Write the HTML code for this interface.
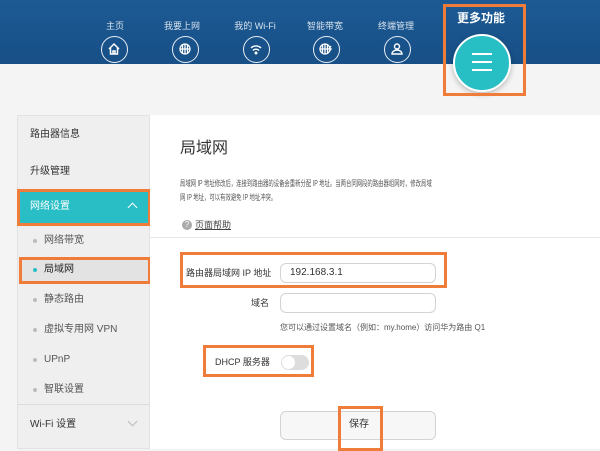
<!DOCTYPE html>
<html><head><meta charset="utf-8"><style>
*{margin:0;padding:0;box-sizing:border-box}
body{width:600px;height:449px;overflow:hidden;background:#f4f4f4;font-family:"Liberation Sans","Noto Sans CJK SC",sans-serif;position:relative;color:#333}
.a{position:absolute;line-height:12px}
.hdr{left:0;top:0;width:600px;height:64px;background:linear-gradient(#1d5a94,#174f86)}
.nav{top:20px;width:70px;text-align:center;color:#d6e2ee;font-size:9px}
.ic{top:36px;width:27px;height:27px;border:1.5px solid #e8eef5;border-radius:50%}
.ob{border:3px solid #f07c3a}
.side{left:17px;top:115px;width:133px;height:334px;background:#efefef;border:1px solid #e2e2e2}
.si{left:30px;font-size:10px;color:#333}
.sub{left:44px;font-size:10px;color:#555}
.dot{left:33px;width:4px;height:4px;border-radius:50%;background:#bbb}
.main{left:150px;top:115px;width:450px;height:334px;background:#fff}
.inp{left:280px;width:156px;height:20px;border:1px solid #d3d3d3;border-radius:6px;background:#fff;font-size:10px;padding-left:9px;line-height:18px}
</style></head><body>
<div class="a hdr"></div>
<div class="a nav" style="left:80px">主页</div>
<div class="a nav" style="left:147px">我要上网</div>
<div class="a nav" style="left:220px">我的 Wi-Fi</div>
<div class="a nav" style="left:290px">智能带宽</div>
<div class="a nav" style="left:361px">终端管理</div>
<div class="a ic" style="left:101px"><svg width="24" height="24" viewBox="0 0 24 24" fill="none" stroke="#fff" stroke-width="1.5"><path d="M7 12l5-5 5 5M8.5 11v6h7v-6M11 17v-3h2v3"/></svg></div>
<div class="a ic" style="left:172px"><svg width="24" height="24" viewBox="0 0 24 24" fill="none" stroke="#fff" stroke-width="1.3"><circle cx="12" cy="12" r="5"/><path d="M7 12h10M12 7v10M9.5 8v8M14.5 8v8"/></svg></div>
<div class="a ic" style="left:243px"><svg width="24" height="24" viewBox="0 0 24 24" fill="none" stroke="#fff" stroke-width="1.4"><path d="M7 11a7 7 0 0 1 10 0M9 13.5a4 4 0 0 1 6 0"/><circle cx="12" cy="16" r="0.8" fill="#fff"/></svg></div>
<div class="a ic" style="left:313px"><svg width="24" height="24" viewBox="0 0 24 24" fill="none" stroke="#fff" stroke-width="1.3"><circle cx="11" cy="12" r="5"/><path d="M6 12h10M11 7v10M8.5 8v8M13.5 8v8M17 9l-2 3h2l-2 3"/></svg></div>
<div class="a ic" style="left:384px"><svg width="24" height="24" viewBox="0 0 24 24" fill="none" stroke="#fff" stroke-width="1.4"><circle cx="12" cy="9.5" r="2.5"/><path d="M7 17a5 4 0 0 1 10 0z"/></svg></div>
<div class="a" style="left:457px;top:12px;color:#fff;font-size:12px;font-weight:bold">更多功能</div>
<div class="a" style="left:453px;top:34px;width:58px;height:58px;border-radius:50%;background:#27bec4;border:2px solid #fff;box-shadow:0 2px 6px rgba(0,0,0,.25)"></div>
<div class="a" style="left:472px;top:53px;width:20px;height:2px;background:#fff"></div>
<div class="a" style="left:472px;top:61px;width:20px;height:2px;background:#fff"></div>
<div class="a" style="left:472px;top:69px;width:20px;height:2px;background:#fff"></div>
<div class="a ob" style="left:443px;top:4px;width:83px;height:92px"></div>

<div class="a side"></div>
<div class="a si" style="top:129px">路由器信息</div>
<div class="a si" style="top:166px">升级管理</div>
<div class="a" style="left:17px;top:190px;width:133px;height:35px;background:#29bec5"></div>
<div class="a" style="left:30px;top:201px;color:#fff;font-size:10px">网络设置</div>
<div class="a" style="left:129px;top:204px;width:7px;height:7px;border-left:1px solid #fff;border-top:1px solid #fff;transform:rotate(45deg)"></div>
<div class="a ob" style="left:17px;top:189px;width:134px;height:37px"></div>
<div class="a" style="left:19px;top:258px;width:131px;height:25px;background:#e3e3e3"></div>
<div class="a ob" style="left:19px;top:257px;width:132px;height:27px"></div>
<div class="a dot" style="top:239px"></div><div class="a sub" style="top:235px">网络带宽</div>
<div class="a dot" style="top:268px;background:#29bec5"></div><div class="a sub" style="top:264px;color:#222">局域网</div>
<div class="a dot" style="top:298px"></div><div class="a sub" style="top:294px">静态路由</div>
<div class="a dot" style="top:328px"></div><div class="a sub" style="top:324px">虚拟专用网 VPN</div>
<div class="a dot" style="top:358px"></div><div class="a sub" style="top:354px">UPnP</div>
<div class="a dot" style="top:388px"></div><div class="a sub" style="top:384px">智联设置</div>
<div class="a" style="left:17px;top:404px;width:133px;height:1px;background:#ddd"></div>
<div class="a si" style="top:419px">Wi-Fi 设置</div>
<div class="a" style="left:129px;top:418px;width:7px;height:7px;border-right:1px solid #bbb;border-bottom:1px solid #bbb;transform:rotate(45deg)"></div>

<div class="a main"></div>
<div class="a" style="left:180px;top:140px;font-size:16px;line-height:18px;color:#333">局域网</div>
<div class="a" style="left:180px;top:177px;font-size:8px;color:#555;line-height:14px;white-space:nowrap;transform:scaleX(0.67);transform-origin:0 0">局域网 IP 地址修改后，连接到路由器的设备会重新分配 IP 地址。当两台同网段的路由器组网时，修改局域<br>网 IP 地址，可以有效避免 IP 地址冲突。</div>
<div class="a" style="left:182px;top:220px;width:10px;height:10px;border-radius:50%;background:#aaa;color:#fff;font-size:8px;text-align:center;line-height:10px">?</div>
<div class="a" style="left:195px;top:219px;font-size:9px;color:#444;text-decoration:underline">页面帮助</div>
<div class="a" style="left:150px;top:237px;width:450px;height:1px;background:#e6e6e6"></div>

<div class="a" style="left:186px;top:267px;font-size:9px">路由器局域网 IP 地址</div>
<div class="a inp" style="top:263px">192.168.3.1</div>
<div class="a ob" style="left:180px;top:252px;width:267px;height:36px"></div>
<div class="a" style="left:251px;top:297px;font-size:9px">域名</div>
<div class="a inp" style="top:293px"></div>
<div class="a" style="left:280px;top:322px;font-size:8px;color:#555">您可以通过设置域名（例如：my.home）访问华为路由 Q1</div>
<div class="a" style="left:215px;top:356px;font-size:9px">DHCP 服务器</div>
<div class="a" style="left:281px;top:355px;width:28px;height:15px;border-radius:8px;background:#ddd"></div>
<div class="a" style="left:282px;top:356px;width:13px;height:13px;border-radius:50%;background:#fff"></div>
<div class="a ob" style="left:203px;top:345px;width:111px;height:32px"></div>
<div class="a" style="left:280px;top:411px;width:156px;height:29px;border:1px solid #d3d3d3;border-radius:6px;background:#f7f7f7"></div>
<div class="a" style="left:349px;top:419px;font-size:10px">保存</div>
<div class="a ob" style="left:338px;top:406px;width:45px;height:45px"></div>
</body></html>
